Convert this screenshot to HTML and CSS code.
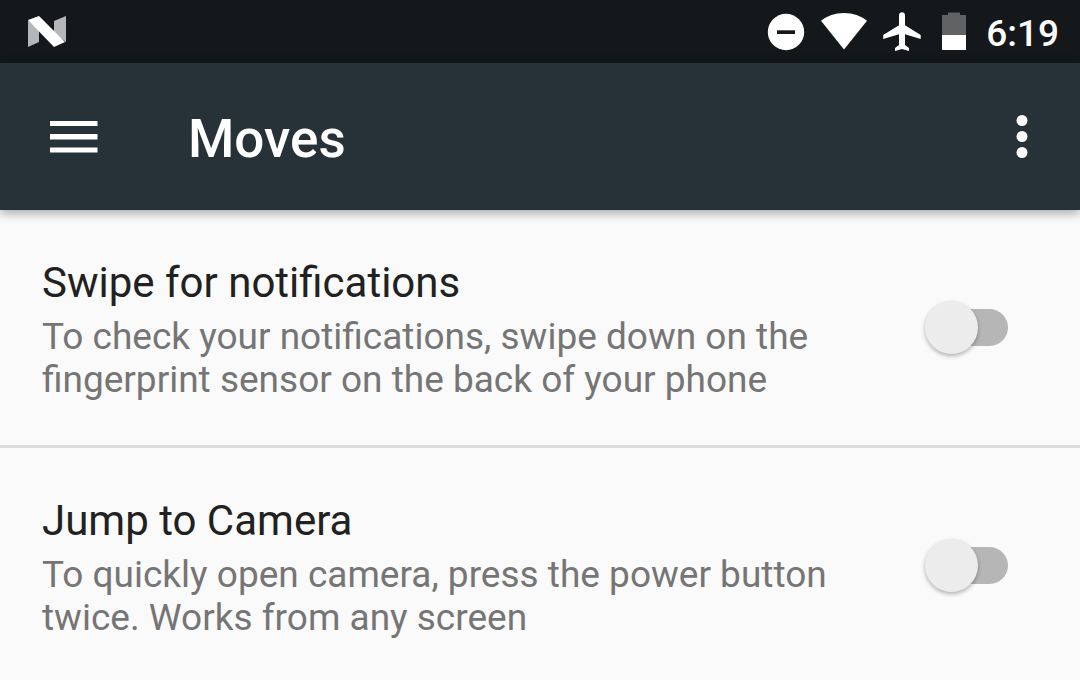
FILE: index.html
```html
<!DOCTYPE html>
<html lang="en">
<head>
  <meta charset="UTF-8" />
  <meta name="viewport" content="width=device-width, initial-scale=1.0"/>
  <title>Moves</title>
  <link rel="stylesheet" href="styles.css">
</head>
<body>
  <div class="status-bar">
    <svg class="status-logo" width="40" height="32" viewBox="0 0 40 32" aria-hidden="true">
      <path d="M1 4L12 12V26L1 31Z" fill="#b4b6b7"/>
      <path d="M27 5L39 0V26L27 17Z" fill="#b4b6b7"/>
      <path d="M1 4L12 0L38 26L27 31Z" fill="#fff"/>
    </svg>
    <div class="status-icons">
      <svg width="38" height="40" viewBox="0 0 38 40" aria-hidden="true">
        <circle cx="19" cy="20" r="18.2" fill="#fff"/>
        <path d="M10 18.3H28V22H10Z" fill="#15181a"/>
      </svg>
      <svg class="wifi" width="46" height="40" viewBox="0 0 46 40" aria-hidden="true">
        <path d="M23 37.5L0 8.8C6 3.8 14 1 23 1S40 3.8 46 8.8Z" fill="#fff"/>
      </svg>
      <svg class="plane" width="38" height="40" viewBox="0 0 38 40" aria-hidden="true">
        <path d="M37.7 27V23L22 13.200V3.200C22 1.400 20.700 0.200 19 0.200S16 1.400 16 3.200V13.200L0.200 23V27L16 22.300V33L12 36V39L19 37L26 39V36L22 33V22.300Z" fill="#fff"/>
      </svg>
      <svg class="battery" width="24" height="40" viewBox="0 0 24 40" aria-hidden="true">
        <path d="M6 0.500H18V3H24V23H0V3H6Z" fill="#606264"/>
        <path d="M0 23H24V38H0Z" fill="#fff"/>
      </svg>
      <span class="clock">6:19</span>
    </div>
  </div>

  <header class="toolbar">
    <button type="button" class="icon-btn" aria-label="Open menu">
      <svg width="48" height="34" viewBox="0 0 48 34" aria-hidden="true">
        <path d="M0 1H47.500V6H0ZM0 14H47.500V19.500H0ZM0 27.500H47.500V32.500H0Z" fill="#fff"/>
      </svg>
    </button>
    <h1 class="toolbar-title">Moves</h1>
    <button type="button" class="icon-btn" aria-label="More options">
      <svg width="12" height="44" viewBox="0 0 12 44" aria-hidden="true">
        <circle cx="6" cy="5.500" r="5.500" fill="#fff"/>
        <circle cx="6" cy="21.500" r="5.500" fill="#fff"/>
        <circle cx="6" cy="37.500" r="5.500" fill="#fff"/>
      </svg>
    </button>
  </header>

  <main class="settings">
    <div class="setting">
      <label class="setting-text" for="swipe">
        <span class="setting-title">Swipe for notifications</span>
        <span class="setting-summary">To check your notifications, swipe down on the fingerprint sensor on the back of your phone</span>
      </label>
      <input type="checkbox" class="switch" id="swipe" role="switch">
    </div>
    <div class="setting">
      <label class="setting-text" for="camera">
        <span class="setting-title">Jump to Camera</span>
        <span class="setting-summary">To quickly open camera, press the power button twice. Works from any screen</span>
      </label>
      <input type="checkbox" class="switch" id="camera" role="switch">
    </div>
  </main>
</body>
</html>
```
FILE: styles.css
```css
* {
    margin: 0;
    padding: 0;
    box-sizing: border-box;
}
body {
    font-family: Roboto, sans-serif;
    background: #fafafa;
    color: #212121;
}
svg {
    display: block;
}

/* Status bar */
.status-bar {
    display: flex;
    align-items: center;
    justify-content: space-between;
    height: 63px;
    padding: 0 21px 0 27px;
    background: #15181a;
}
.status-icons {
    display: flex;
    align-items: center;
    gap: 16px;
}
.battery {
    margin: 0 4px 0 5px;
}
.clock {
    padding-top: 4px;
    color: #fff;
    font-size: 37px;
    font-weight: 500;
    line-height: 43px;
}

/* Toolbar */
.toolbar {
    position: relative;
    display: flex;
    align-items: center;
    height: 147px;
    padding: 0 52px 0 50px;
    background: #263238;
    box-shadow: 0 3px 10px rgba(0, 0, 0, 0.35);
}
.icon-btn {
    border: none;
    background: none;
    cursor: pointer;
}
.toolbar-title {
    flex: 1;
    margin-left: 90px;
    padding-top: 4px;
    color: #fff;
    font-size: 53px;
    font-weight: 500;
    line-height: 62px;
}

/* Settings list */
.setting {
    display: flex;
    align-items: center;
    justify-content: space-between;
    gap: 80px;
    padding: 44px 72px 44px 42px;
    border-bottom: 3px solid #dcdcdc;
}
.setting:last-child {
    border-bottom: none;
}
.setting-text {
    display: flex;
    flex-direction: column;
    gap: 8px;
    max-width: 800px;
    padding-top: 4px;
}
.setting-title {
    font-size: 42px;
    line-height: 49px;
}
.setting-summary {
    color: #757575;
    font-size: 37px;
    line-height: 43px;
}
.switch {
    appearance: none;
    position: relative;
    flex: none;
    width: 78px;
    height: 37px;
    border-radius: 19px;
    background: #b6b6b6;
    cursor: pointer;
}
.switch::before {
    content: "";
    position: absolute;
    top: -8px;
    left: -5px;
    width: 53px;
    height: 53px;
    border-radius: 50%;
    background: #ececec;
    box-shadow: 0 2px 4px rgba(0, 0, 0, 0.3);
}
.switch:checked {
    background: #80cbc4;
}
.switch:checked::before {
    left: 30px;
    background: #009688;
}
```
